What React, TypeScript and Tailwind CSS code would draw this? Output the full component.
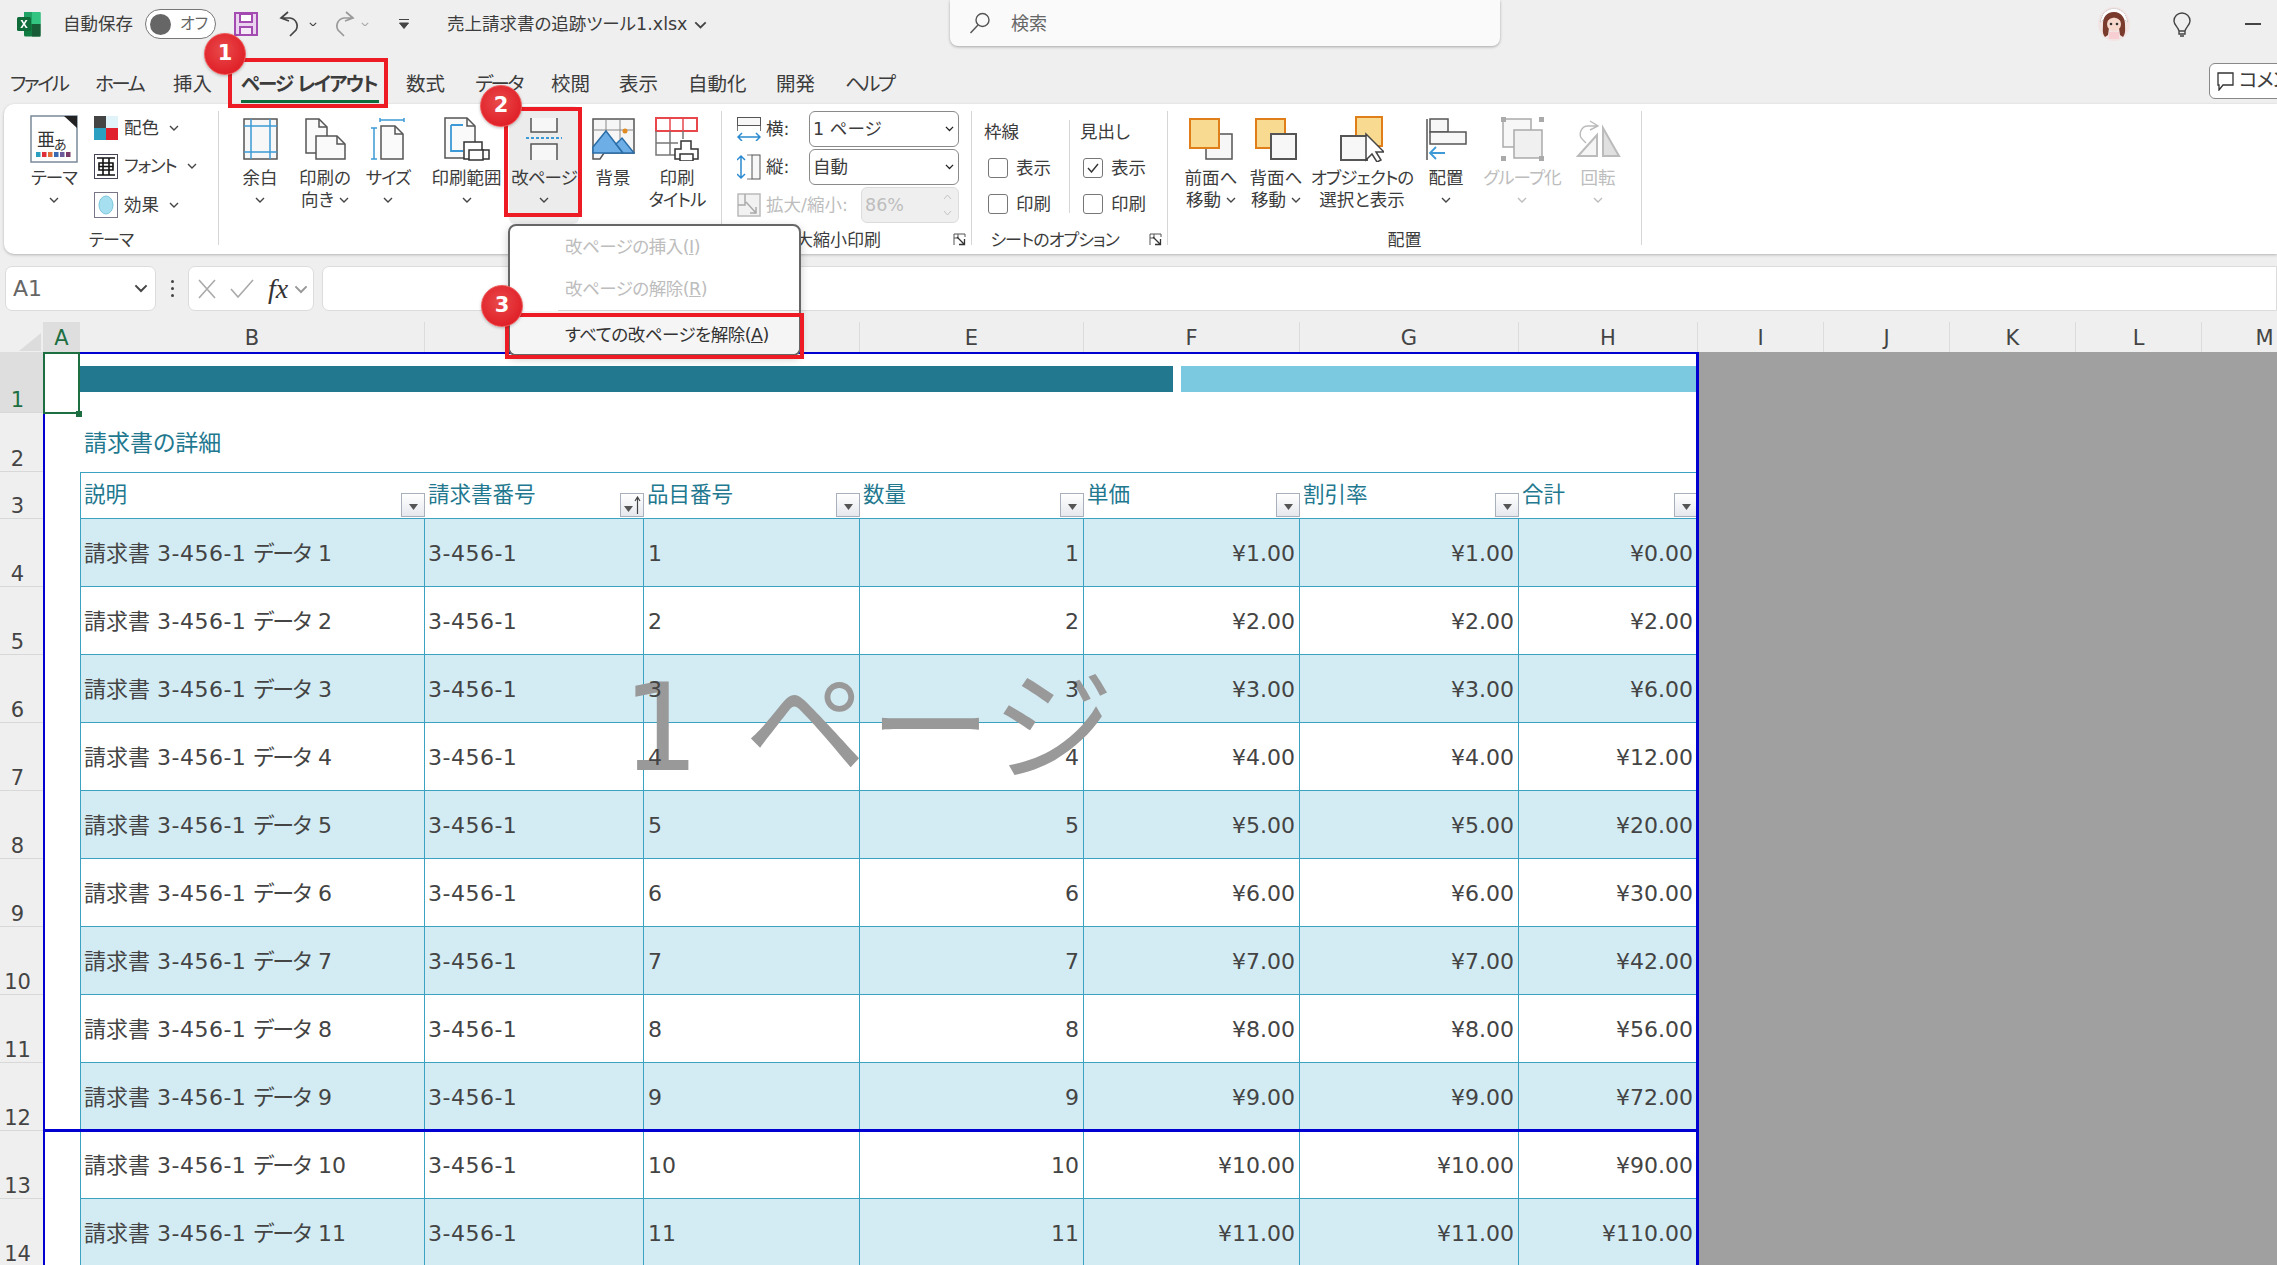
import React from "react";

const Chev = ({ w = 10, c = "#444" }: { w?: number; c?: string }) => (
  <svg width={w} height={w * 0.6} viewBox="0 0 10 6" className="inline-block shrink-0">
    <path d="M1 1l4 4 4-4" fill="none" stroke={c} strokeWidth="1.4" />
  </svg>
);

const ExcelLogo = () => (
  <svg width="26" height="26" viewBox="0 0 26 26" className="shrink-0">
    <path d="M8 1h15a1.5 1.5 0 0 1 1.5 1.5V13H8z" fill="#21a366" />
    <path d="M8 13h16.500v11a1.500 1.500 0 0 1-1.500 1.500H9.500A1.500 1.500 0 0 1 8 24z" fill="#107c41" />
    <path d="M16 1h8.500v12H16z" fill="#33c481" />
    <path d="M16 13h8.500v12.500H16z" fill="#185c37" />
    <rect x="1" y="6" width="14" height="14" rx="1.500" fill="#0f6b38" />
    <path d="M4.500 9l2.500 4-2.700 4h2l1.700-2.800L9.700 17h2L9 13l2.500-4h-2L8 11.800 6.500 9z" fill="#fff" />
  </svg>
);
const Save = () => (
  <svg width="24" height="24" viewBox="0 0 24 24" className="shrink-0">
    <path d="M1 1h22v22H1z" fill="#e9d3ef" stroke="#a34bb0" strokeWidth="2" />
    <path d="M6 2h12v8H6z" fill="#fff" stroke="#a34bb0" strokeWidth="2" />
    <path d="M6 15h12v8H6z" fill="#f5e9f7" stroke="#a34bb0" strokeWidth="2" />
  </svg>
);
const Undo = ({ c }: { c: string }) => (
  <svg width="22" height="26" viewBox="0 0 22 26" className="shrink-0">
    <path d="M9 1L2 7l8 3M2 7h9a8 8 0 0 1 6 12l-6 6" fill="none" stroke={c} strokeWidth="1.700" />
  </svg>
);
const Redo = ({ c }: { c: string }) => (
  <svg width="22" height="26" viewBox="0 0 22 26" className="shrink-0">
    <path d="M13 1l7 6-8 3M20 7h-9a8 8 0 0 0-6 12l6 6" fill="none" stroke={c} strokeWidth="1.700" />
  </svg>
);
const Avatar = () => (
  <svg width="38" height="34" viewBox="0 0 38 34" className="shrink-0">
    <ellipse cx="19" cy="17" rx="16" ry="17" fill="#f3e4e4" />
    <path d="M8 7q11-11 22 0l3 8-5-3H10l-5 3z" fill="#fff" stroke="#999" strokeWidth=".6" strokeDasharray="1 1" />
    <path d="M19 5c-8 0-11 6-11 12s-1 9 2 13l3-2 1-7h10l1 7 3 2c3-4 2-8 2-13S27 5 19 5z" fill="#7a3a2c" />
    <ellipse cx="19" cy="17" rx="7" ry="7" fill="#f6d9cc" />
    <path d="M12 14q7-7 14 0l-2-5H14z" fill="#7a3a2c" />
    <circle cx="16" cy="17" r="1.300" fill="#333" />
    <circle cx="22" cy="17" r="1.300" fill="#333" />
    <path d="M14 25h10v7H14z" fill="#f7cfd2" />
  </svg>
);
const Bulb = () => (
  <svg width="20" height="25" viewBox="0 0 20 25" className="shrink-0">
    <path d="M10 1a8 8 0 0 0-8 8c0 4 4 6 5 10h6c1-4 5-6 5-10a8 8 0 0 0-8-8zM7 19h6v3H7zM8 24h4" fill="none" stroke="#444" strokeWidth="1.400" />
  </svg>
);
const SearchIc = () => (
  <svg width="22" height="22" viewBox="0 0 22 22" className="shrink-0">
    <circle cx="13.500" cy="8" r="6.500" fill="none" stroke="#555" strokeWidth="1.400" />
    <path d="M9 13L1.500 21" stroke="#555" strokeWidth="1.400" />
  </svg>
);

const Sq = ({ children, w, h }: { children: React.ReactNode; w: number; h: number }) => (
  <svg width={w} height={h} viewBox={`0 0 ${w} ${h}`} className="shrink-0">
    {children}
  </svg>
);

const ThemeIc = () => (
  <Sq w={48} h={48}>
    <rect x="1" y="1" width="46" height="46" fill="#fff" stroke="#7a8a9a" strokeWidth="1.500" />
    <path d="M34 1h13v12z" fill="#222" />
    <text x="7" y="31" fontSize="18" fontFamily="Noto Sans CJK JP" fill="#333">亜</text>
    <text x="24" y="34" fontSize="13" fontFamily="Noto Sans CJK JP" fill="#333">あ</text>
    {["#2a9fbf", "#e0303a", "#e0703a", "#3a6ab0", "#6a5a9a", "#7a3a6a"].map((c, i) => (
      <rect key={c} x={6 + i * 6} y="37" width="4.500" height="5" fill={c} />
    ))}
  </Sq>
);
const ColorIc = () => (
  <Sq w={24} h={24}>
    <rect width="12" height="12" fill="#444" />
    <rect x="12" width="12" height="12" fill="#dff3f8" />
    <rect y="12" width="12" height="12" fill="#2ba0c0" />
    <rect x="12" y="12" width="12" height="12" fill="#e0202c" />
  </Sq>
);
const FontIc = () => (
  <Sq w={24} h={25}>
    <rect x=".5" y=".5" width="23" height="24" fill="#fff" stroke="#445" />
    <path d="M3 4h18M3 21h18M5 9h14v7H5zM9 4v17M15 4v17M5 12.500h14" stroke="#111" strokeWidth="1.600" fill="none" />
  </Sq>
);
const EffectIc = () => (
  <Sq w={24} h={26}>
    <rect x=".5" y=".5" width="23" height="25" fill="#fff" stroke="#778" />
    <ellipse cx="12" cy="13" rx="7" ry="9" fill="#a6e0f0" stroke="#7cc6dc" />
  </Sq>
);
const Margin = () => (
  <Sq w={35} h={42}>
    <rect x="1" y="1" width="33" height="40" fill="#f7f7f7" stroke="#555" strokeWidth="1.500" />
    <path d="M8 1v40M27 1v40M1 8h33M1 34h33" stroke="#3e9ad6" strokeWidth="1.500" />
  </Sq>
);
const Orient = () => (
  <Sq w={44} h={42}>
    <path d="M3 1h13l8 8v26H3z" fill="#fafafa" stroke="#555" strokeWidth="1.500" />
    <path d="M16 1v8h8" fill="none" stroke="#555" strokeWidth="1.500" />
    <path d="M13 18h21l8 8v15H13z" fill="#fafafa" stroke="#555" strokeWidth="1.500" />
    <path d="M34 18v8h8" fill="none" stroke="#555" strokeWidth="1.500" />
  </Sq>
);
const SizeIc = () => (
  <Sq w={34} h={42}>
    <path d="M10 8h14l8 8v25H10z" fill="#fafafa" stroke="#555" strokeWidth="1.500" />
    <path d="M24 8v8h8" fill="none" stroke="#555" strokeWidth="1.500" />
    <path d="M9 2h24M9 0v4M33 0v4M3 10v31M0 10h6M0 41h6" stroke="#3e9ad6" strokeWidth="1.500" />
  </Sq>
);
const PrintArea = () => (
  <Sq w={48} h={44}>
    <path d="M2 1h22l8 8v32H2z" fill="#fafafa" stroke="#555" strokeWidth="1.500" />
    <path d="M24 1v8h8" fill="none" stroke="#555" strokeWidth="1.500" />
    <path d="M8 8h12M8 8v26h12" fill="none" stroke="#3e9ad6" strokeWidth="1.800" />
    <path d="M22 26h18v8h7v9H22z" fill="#fff" stroke="#333" strokeWidth="1.500" transform="translate(-1 -1)" />
    <path d="M26 33h14v10H26z" fill="#fff" stroke="#333" strokeWidth="1.500" />
  </Sq>
);
const BreakIc = () => (
  <Sq w={36} h={42}>
    <path d="M5 0v14h26V0" fill="#f7f7f7" stroke="#555" strokeWidth="1.500" />
    <path d="M0 20h36" stroke="#3e9ad6" strokeWidth="2" strokeDasharray="3 2" />
    <path d="M5 42V26h26v16" fill="#f7f7f7" stroke="#555" strokeWidth="1.500" />
  </Sq>
);
const BgIc = () => (
  <Sq w={43} h={42}>
    <path d="M1 1h41v34H12l-4 6H1z" fill="#f6f6f6" stroke="#555" strokeWidth="1.500" />
    <path d="M14 1v20M28 1v20M1 12h41" stroke="#888" />
    <circle cx="33" cy="13" r="2.500" fill="#e08a20" />
    <path d="M1 29L14 13l17 22H1z" fill="#6eaee6" stroke="#2a6ea8" strokeWidth="1.500" />
    <path d="M24 26l6-6 12 15H31z" fill="#6eaee6" stroke="#2a6ea8" strokeWidth="1.500" />
  </Sq>
);
const TitleIc = () => (
  <Sq w={44} h={44}>
    <path d="M1 1h41v13H1z" fill="#fff" stroke="#e8474c" strokeWidth="2" />
    <path d="M15 1v13M28 1v13" stroke="#e8474c" strokeWidth="1.500" />
    <path d="M1 14v24h20M15 14v24M28 14v8M1 26h22" fill="none" stroke="#777" strokeWidth="1.500" />
    <path d="M26 24h10v8h7v10H20V32h6z" fill="#fff" stroke="#333" strokeWidth="1.500" />
    <path d="M25 37h13v7H25z" fill="#fff" stroke="#333" strokeWidth="1.500" />
  </Sq>
);
const Front = () => (
  <Sq w={44} h={42}>
    <path d="M15 16h28v25H17V30" fill="#f7f7f7" stroke="#555" strokeWidth="1.500" />
    <rect x="1" y="1" width="29" height="29" fill="#f8da90" stroke="#e07f1a" strokeWidth="2" />
  </Sq>
);
const Back = () => (
  <Sq w={43} h={42}>
    <rect x="1" y="1" width="29" height="29" fill="#f8da90" stroke="#e07f1a" strokeWidth="2" />
    <rect x="16" y="16" width="25" height="25" fill="#f7f7f7" stroke="#555" strokeWidth="2" />
  </Sq>
);
const Selection = () => (
  <Sq w={44} h={46}>
    <rect x="16" y="1" width="26" height="29" fill="#f8da90" stroke="#e07f1a" strokeWidth="2" />
    <rect x="1" y="20" width="26" height="24" fill="#f7f7f7" stroke="#555" strokeWidth="2" />
    <path d="M26 18v26l6-6 5 8 4-2-5-8h8z" fill="#fff" stroke="#444" strokeWidth="1.500" />
  </Sq>
);
const AlignIc = () => (
  <Sq w={42} h={42}>
    <path d="M2 1v41" stroke="#555" strokeWidth="1.500" />
    <rect x="5" y="1" width="18" height="13" fill="#f7f7f7" stroke="#555" strokeWidth="1.500" />
    <rect x="5" y="14" width="36" height="12" fill="#f7f7f7" stroke="#555" strokeWidth="1.500" />
    <path d="M20 35H5m6-6l-6 6 6 6" fill="none" stroke="#3e9ad6" strokeWidth="1.800" />
  </Sq>
);
const GroupIc = () => (
  <Sq w={43} h={44}>
    <rect x="2" y="2" width="28" height="28" fill="#f7f7f7" stroke="#aaa" strokeWidth="1.500" />
    <rect x="13" y="13" width="28" height="28" fill="#f0f0f0" stroke="#aaa" strokeWidth="1.500" />
    <path d="M0 0h5v5H0zM38 0h5v5h-5zM0 39h5v5H0zM38 39h5v5h-5z" fill="#aaa" />
  </Sq>
);
const RotateIc = () => (
  <Sq w={46} h={38}>
    <path d="M22 15l-19 21h19z" fill="#f5f5f5" stroke="#bbb" strokeWidth="2" />
    <path d="M28 8v28h16z" fill="#e0e0e0" stroke="#bbb" strokeWidth="2" />
    <path d="M15 1l8 5-8 4M22 6h-8a8 8 0 0 0-6 14l3 3" fill="none" stroke="#bbb" strokeWidth="1.400" />
  </Sq>
);
const HIc = () => (
  <Sq w={24} h={24}>
    <rect x=".5" y=".5" width="23" height="8" fill="#f7f7f7" stroke="#555" />
    <path d="M.5 9v5M23.500 9v5" stroke="#777" />
    <path d="M1 20h22M5 16l-4 4 4 4M19 16l4 4-4 4" fill="none" stroke="#2b8ad0" strokeWidth="1.500" />
  </Sq>
);
const VIc = () => (
  <Sq w={24} h={26}>
    <rect x="15" y="1" width="8" height="24" fill="#f7f7f7" stroke="#555" />
    <path d="M4 2v22M0 6l4-4 4 4M0 20l4 4 4-4" fill="none" stroke="#2b8ad0" strokeWidth="1.500" />
    <path d="M10 1h5M10 25h5" stroke="#777" />
  </Sq>
);
const ScaleIc = () => (
  <Sq w={24} h={24}>
    <rect x="1" y="1" width="22" height="22" fill="#f2f2f2" stroke="#bbb" strokeWidth="1.500" />
    <path d="M1 12h7V1M9 9l10 11M19 14v6h-6" fill="none" stroke="#aaa" strokeWidth="1.500" />
  </Sq>
);
const Launcher = () => (
  <Sq w={13} h={13}>
    <path d="M1 12V1h11v3M5 1v4H1" fill="none" stroke="#555" />
    <path d="M4 4l7 7M6 11.500h5.500V6" fill="none" stroke="#333" strokeWidth="1.300" />
  </Sq>
);

type LB = { w: string; icon: React.ReactNode; lines: string[]; chev?: "own" | "inline"; dis?: boolean };

const hasKana = (s: string) => /[ァ-ヶー]/.test(s);

const Large = ({ w, icon, lines, chev, dis }: LB) => (
  <div className={`${w} flex flex-col items-center pt-[6px] shrink-0 ${dis ? "text-[#bdbdbd]" : "text-[#3c3c3c]"}`}>
    <div className="h-[57px] flex items-center justify-center">{icon}</div>
    {lines.map((l, i) => (
      <div key={l} className={`leading-[22px] h-[22px] whitespace-nowrap flex items-center gap-[5px] ${hasKana(l) ? "tracking-[-0.9px]" : ""}`}>
        {l}
        {chev === "inline" && i === lines.length - 1 && <Chev />}
      </div>
    ))}
    {chev === "own" && (
      <div className="h-[22px] flex items-center">
        <Chev c={dis ? "#bdbdbd" : "#444"} />
      </div>
    )}
  </div>
);

const Small = ({ icon, label, gap }: { icon: React.ReactNode; label: string; gap: string }) => (
  <div className="h-[39px] flex items-center gap-[6px]">
    {icon}
    <span className={`whitespace-nowrap ${hasKana(label) ? "tracking-[-1.2px]" : ""}`}>{label}</span>
    <span className={`${gap} flex items-center`}>
      <Chev />
    </span>
  </div>
);

const GroupLabel = ({ children, tight }: { children: React.ReactNode; tight?: boolean }) => (
  <div className={`h-[30px] leading-[32px] text-center text-[17px] text-[#3c3c3c] whitespace-nowrap ${tight ? "tracking-[-0.9px]" : ""}`}>{children}</div>
);

const Sep = () => <div className="w-px bg-[#d6d6d6] mt-[7px] mb-[9px] shrink-0" />;

const Check = ({ on, label }: { on?: boolean; label: string }) => (
  <div className="h-[36px] flex items-center gap-[8px]">
    <span className="w-[20px] h-[20px] rounded-[3px] border border-[#777] bg-white flex items-center justify-center">
      {on && (
        <svg width="12" height="10" viewBox="0 0 12 10">
          <path d="M1 5l3.500 4L11 1" fill="none" stroke="#333" strokeWidth="1.400" />
        </svg>
      )}
    </span>
    <span>{label}</span>
  </div>
);

const Sel = ({ label }: { label: string }) => (
  <div className="w-[150px] h-[36px] rounded-[6px] border border-[#8a8a8a] bg-white flex items-center justify-between pl-[3px] pr-[4px]">
    <span>{label}</span>
    <Chev w={9} c="#222" />
  </div>
);

const Badge = ({ n, cls }: { n: string; cls: string }) => (
  <div
    className={`absolute ${cls} w-[42px] h-[42px] rounded-full bg-[radial-gradient(circle_at_45%_40%,#e84a4a,#e01f28_75%,#c9141c)] border border-[#f05a5a] text-white text-[21px] font-bold flex items-center justify-center z-40 shadow-[0_1px_3px_rgba(0,0,0,0.25)]`}
  >
    {n}
  </div>
);

const colW = [
  "w-[345px]",
  "w-[219px]",
  "w-[216px]",
  "w-[224px]",
  "w-[216px]",
  "w-[219px]",
  "w-[179px]",
];
const headers = ["説明", "請求書番号", "品目番号", "数量", "単価", "割引率", "合計"];

const FilterBtn = ({ sort }: { sort?: boolean }) => (
  <div className="absolute right-0 bottom-[1px] w-[24px] h-[24px] border border-[#a8b0bc] bg-gradient-to-b from-white to-[#e6e8ee] flex items-center justify-center gap-[1px]">
    <svg width="9" height="6" viewBox="0 0 9 6" className={sort ? "mt-[8px]" : "mt-[3px]"}>
      <path d="M0 0h9L4.500 6z" fill="#555" />
    </svg>
    {sort && (
      <svg width="7" height="18" viewBox="0 0 7 18">
        <path d="M3.500 18V2M1 5l2.500-4L6 5" fill="none" stroke="#444" strokeWidth="1.200" />
      </svg>
    )}
  </div>
);

const RowHead = ({ n, sel, cls }: { n: number; sel?: boolean; cls: string }) => (
  <div
    className={`w-[43px] ${cls} shrink-0 border-b border-[#d8d8d8] flex items-end justify-center pr-[8px] text-[21px] leading-[24px] ${
      sel ? "bg-[#dedede] text-[#1d6f42]" : "bg-[#efefef] text-[#444]"
    }`}
  >
    {n}
  </div>
);

const rows = [1, 2, 3, 4, 5, 6, 7, 8, 9, 10, 11];
const tabKana = "tracking-[-2.5px] whitespace-nowrap";

export default function App() {
  return (
    <div className="relative w-[2277px] h-[1265px] overflow-hidden bg-[#efefef] text-[17.5px] text-[#3c3c3c] [font-family:'DejaVu_Sans','Noto_Sans_CJK_JP',sans-serif] [font-feature-settings:'palt']">
      {/* title bar */}
      <div className="h-[48px] flex items-center pl-[16px] text-[17.5px]">
        <ExcelLogo />
        <span className="ml-[21px] w-[76px] whitespace-nowrap">自動保存</span>
        <div className="ml-[6px] w-[71px] h-[30px] rounded-full border border-[#777] bg-white flex items-center pl-[4px] gap-[9px]">
          <span className="w-[21px] h-[21px] rounded-full bg-[#666]" />
          <span className="text-[16px] text-[#666]">オフ</span>
        </div>
        <div className="ml-[18px]">
          <Save />
        </div>
        <div className="ml-[21px] flex items-center gap-[8px]">
          <Undo c="#444" />
          <Chev w={8} />
        </div>
        <div className="ml-[16px] flex items-center gap-[6px]">
          <Redo c="#999" />
          <Chev w={8} c="#aaa" />
        </div>
        <svg width="12" height="12" viewBox="0 0 12 12" className="ml-[29px] shrink-0">
          <path d="M1 1.500h10M1.500 5h9L6 10.500z" fill="#444" stroke="#444" />
        </svg>
        <span className="ml-[37px] w-[239px] whitespace-nowrap">売上請求書の追跡ツール1.xlsx</span>
        <span className="ml-[8px]">
          <Chev w={13} />
        </span>
        <div className="ml-[243px] self-start w-[550px] h-[46px] rounded-b-[8px] bg-[#fafafa] shadow-[0_1px_3px_rgba(0,0,0,0.3)] flex items-center pl-[19px] gap-[20px] text-[#666] text-[18px]">
          <SearchIc />
          <span>検索</span>
        </div>
        <div className="ml-[595px]">
          <Avatar />
        </div>
        <div className="ml-[39px]">
          <Bulb />
        </div>
        <div className="ml-[53px] w-[16px] h-[2px] bg-[#444]" />
      </div>

      {/* tabs */}
      <div className="mt-[12px] h-[44px] flex items-center pl-[10px] pt-[5px] text-[19.5px] text-[#3c3c3c] relative">
        <span className={`w-[85px] ${tabKana}`}>ファイル</span>
        <span className={`w-[78px] ${tabKana}`}>ホーム</span>
        <span className="w-[68px]">挿入</span>
        <span className="w-[165px] font-bold whitespace-nowrap relative tracking-[-1.8px]">
          ページ レイアウト
          <span className="absolute left-0 right-[27px] top-[30px] h-[3px] bg-[#0f6b3b]" />
        </span>
        <span className="w-[69px]">数式</span>
        <span className={`w-[76px] ${tabKana}`}>データ</span>
        <span className="w-[68px]">校閲</span>
        <span className="w-[69px]">表示</span>
        <span className="w-[88px]">自動化</span>
        <span className="w-[69px]">開発</span>
        <span className={`w-[60px] ${tabKana}`}>ヘルプ</span>
        <div className="absolute left-[2209px] top-[3px] w-[90px] h-[36px] rounded-[6px] border border-[#888] bg-white flex items-center pl-[7px] gap-[5px] whitespace-nowrap tracking-[-1px]">
          <svg width="17" height="19" viewBox="0 0 17 19" className="shrink-0">
            <path d="M1 1h15v12H6l-4 5v-5H1z" fill="none" stroke="#333" strokeWidth="1.300" />
          </svg>
          コメント
        </div>
      </div>

      {/* ribbon */}
      <div className="ml-[4px] h-[150px] rounded-l-[10px] bg-white shadow-[0_1px_3px_rgba(0,0,0,0.25)] flex">
        {/* テーマ */}
        <div className="w-[214px] shrink-0 flex flex-col">
          <div className="h-[120px] flex pl-[12px]">
            <Large w="w-[76px]" icon={<ThemeIc />} lines={["テーマ"]} chev="own" />
            <div className="ml-[2px] pt-[5px] flex flex-col">
              <Small icon={<ColorIc />} label="配色" gap="ml-[4px]" />
              <Small icon={<FontIc />} label="フォント" gap="ml-[4px]" />
              <Small icon={<EffectIc />} label="効果" gap="ml-[4px]" />
            </div>
          </div>
          <GroupLabel tight>テーマ</GroupLabel>
        </div>
        <Sep />
        {/* ページ設定 */}
        <div className="w-[502px] shrink-0 flex flex-col">
          <div className="h-[120px] flex pl-[3px]">
            <Large w="w-[76px]" icon={<Margin />} lines={["余白"]} chev="own" />
            <Large w="w-[54px]" icon={<Orient />} lines={["印刷の", "向き"]} chev="inline" />
            <Large w="w-[72px]" icon={<SizeIc />} lines={["サイズ"]} chev="own" />
            <Large w="w-[85px]" icon={<PrintArea />} lines={["印刷範囲"]} chev="own" />
            <div className="w-[70px] h-[118px] mt-[2px] -mb-[2px] bg-[#ececec] rounded-[6px] shrink-0">
              <Large w="w-[70px] -mt-[2px]" icon={<BreakIc />} lines={["改ページ"]} chev="own" />
            </div>
            <Large w="w-[68px]" icon={<BgIc />} lines={["背景"]} />
            <Large w="w-[60px]" icon={<TitleIc />} lines={["印刷", "タイトル"]} />
          </div>
          <div className="pl-[197px] text-left">
            <GroupLabel tight>ページ設定</GroupLabel>
          </div>
        </div>
        <Sep />
        {/* 拡大縮小印刷 */}
        <div className="w-[249px] shrink-0 flex flex-col">
          <div className="h-[120px] pl-[15px] pt-[6px] flex flex-col">
            <div className="h-[39px] flex items-center">
              <HIc />
              <span className="ml-[5px] w-[43px]">横:</span>
              <Sel label="1 ページ" />
            </div>
            <div className="h-[39px] flex items-center">
              <VIc />
              <span className="ml-[5px] w-[43px]">縦:</span>
              <Sel label="自動" />
            </div>
            <div className="h-[39px] flex items-center text-[#bdbdbd]">
              <ScaleIc />
              <span className="ml-[5px] w-[95px] whitespace-nowrap">拡大/縮小:</span>
              <div className="w-[98px] h-[36px] rounded-[6px] border border-[#dcdcdc] bg-[#efefef] flex items-center justify-between pl-[3px] pr-[6px]">
                <span>86%</span>
                <svg width="9" height="22" viewBox="0 0 9 22">
                  <path d="M1 5l3.500-4L8 5M1 17l3.500 4L8 17" fill="none" stroke="#c4c4c4" />
                </svg>
              </div>
            </div>
          </div>
          <div className="flex items-center justify-end pr-[5px] gap-[72px]">
            <GroupLabel>拡大縮小印刷</GroupLabel>
            <Launcher />
          </div>
        </div>
        <Sep />
        {/* シートのオプション */}
        <div className="w-[195px] shrink-0 flex flex-col">
          <div className="h-[120px] flex pt-[10px]">
            <div className="w-[97px] pl-[12px] shrink-0">
              <div className="h-[36px] flex items-center">枠線</div>
              <div className="pl-[4px]">
                <Check label="表示" />
                <Check label="印刷" />
              </div>
            </div>
            <div className="w-px h-[93px] mt-[6px] bg-[#d6d6d6]" />
            <div className="pl-[10px]">
              <div className="h-[36px] flex items-center">見出し</div>
              <div className="pl-[3px]">
                <Check on label="表示" />
                <Check label="印刷" />
              </div>
            </div>
          </div>
          <div className="flex items-center justify-end pr-[5px] gap-[30px]">
            <GroupLabel tight>シートのオプション</GroupLabel>
            <Launcher />
          </div>
        </div>
        <Sep />
        {/* 配置 */}
        <div className="w-[473px] shrink-0 flex flex-col">
          <div className="h-[120px] flex pl-[13px]">
            <Large w="w-[60px]" icon={<Front />} lines={["前面へ", "移動"]} chev="inline" />
            <Large w="w-[70px]" icon={<Back />} lines={["背面へ", "移動"]} chev="inline" />
            <Large w="w-[102px]" icon={<Selection />} lines={["オブジェクトの", "選択と表示"]} />
            <Large w="w-[66px]" icon={<AlignIc />} lines={["配置"]} chev="own" />
            <Large w="w-[86px]" icon={<GroupIc />} lines={["グループ化"]} chev="own" dis />
            <Large w="w-[66px]" icon={<RotateIc />} lines={["回転"]} chev="own" dis />
          </div>
          <GroupLabel>配置</GroupLabel>
        </div>
        <Sep />
      </div>

      {/* formula bar */}
      <div className="h-[68px] pt-[12px] pb-[11px] flex text-[#555]">
        <div className="ml-[5px] w-[151px] rounded-[7px] border border-[#dcdcdc] bg-white flex items-center justify-between pl-[7px] pr-[7px] text-[22px] text-[#666]">
          <span>A1</span>
          <Chev w={14} />
        </div>
        <div className="w-[32px] flex flex-col items-center justify-center gap-[4px]">
          <span className="w-[3px] h-[3px] bg-[#444] rounded-full" />
          <span className="w-[3px] h-[3px] bg-[#444] rounded-full" />
          <span className="w-[3px] h-[3px] bg-[#444] rounded-full" />
        </div>
        <div className="w-[126px] rounded-[7px] border border-[#dcdcdc] bg-white flex items-center pl-[9px]">
          <svg width="18" height="22" viewBox="0 0 18 22" className="shrink-0">
            <path d="M1 2l16 18M17 2L1 20" stroke="#aaa" strokeWidth="1.600" />
          </svg>
          <svg width="24" height="20" viewBox="0 0 24 20" className="ml-[14px] shrink-0">
            <path d="M1 10l7 8L23 1" fill="none" stroke="#aaa" strokeWidth="1.600" />
          </svg>
          <span className="ml-[14px] text-[28px] leading-[28px] text-[#333] italic [font-family:'Liberation_Serif',serif]">fx</span>
          <span className="ml-[6px]">
            <Chev w={14} c="#999" />
          </span>
        </div>
        <div className="ml-[8px] flex-1 rounded-l-[7px] border border-[#dcdcdc] bg-white" />
      </div>

      {/* column headers */}
      <div className="h-[30px] flex text-[21px] text-[#444] leading-[32px] text-center">
        <div className="w-[43px] shrink-0 flex items-end justify-end pr-[2px] pb-[1px]">
          <svg width="22" height="18" viewBox="0 0 22 18">
            <path d="M22 0v18H0z" fill="#dcdcdc" />
          </svg>
        </div>
        <div className="w-[37px] shrink-0 bg-[#dedede] text-[#1d6f42]">A</div>
        {["B", "C", "D", "E", "F", "G", "H"].map((c, i) => (
          <div key={c} className={`${colW[i]} shrink-0 border-r border-[#dcdcdc]`}>
            {c === "C" || c === "D" ? "" : c}
          </div>
        ))}
        {["I", "J", "K", "L", "M"].map((c) => (
          <div key={c} className="w-[126px] shrink-0 border-r border-[#dcdcdc]">
            {c}
          </div>
        ))}
      </div>

      {/* sheet */}
      <div className="relative flex flex-col text-[22px] text-[#444]">
        {/* row 1 */}
        <div className="flex h-[61px]">
          <RowHead n={1} sel cls="h-[61px]" />
          <div className="w-[37px] shrink-0 bg-white" />
          <div className="w-[1618px] shrink-0 bg-white pt-[14px] pr-[2px]">
            <div className="flex h-[26px] gap-[8px]">
              <div className="w-[1093px] bg-[#22788f]" />
              <div className="flex-1 bg-[#7ac9e0]" />
            </div>
          </div>
          <div className="flex-1 bg-[#a0a0a0]" />
        </div>
        {/* row 2 */}
        <div className="flex h-[59px]">
          <RowHead n={2} cls="h-[59px]" />
          <div className="w-[37px] shrink-0 bg-white" />
          <div className="w-[1618px] shrink-0 bg-white pl-[4px] pt-[12px] text-[23px] text-[#22788f] leading-[36px]">請求書の詳細</div>
          <div className="flex-1 bg-[#a0a0a0]" />
        </div>
        {/* row 3 header */}
        <div className="flex h-[47px]">
          <RowHead n={3} cls="h-[47px]" />
          <div className="w-[37px] shrink-0 bg-white" />
          {headers.map((h, i) => (
            <div
              key={h}
              className={`${colW[i]} shrink-0 relative bg-white border-t border-b border-[#3ba3c1] ${
                i === 0 ? "border-l" : ""
              } pl-[3px] text-[21.5px] text-[#22788f] leading-[44px] whitespace-nowrap`}
            >
              {h}
              <FilterBtn sort={i === 1} />
            </div>
          ))}
          <div className="flex-1 bg-[#a0a0a0]" />
        </div>
        {/* data rows */}
        {rows.map((n) => {
          const blue = n % 2 === 1;
          const bg = blue ? "bg-[#d3ecf4]" : "bg-white";
          const cell = `${bg} shrink-0 border-b border-r border-[#3ba3c1] flex items-center pt-[2px]`;
          const yen = [`¥${n}.00`, `¥${n}.00`, `¥${n * (n - 1)}.00`];
          return (
            <div key={n} className="flex h-[68px]">
              <RowHead n={n + 3} cls="h-[68px]" />
              <div className="w-[37px] shrink-0 bg-white" />
              <div className={`${colW[0]} ${cell} border-l pl-[3px] whitespace-nowrap`}>
                <span className="relative z-20">
                  請求書 <span className="tracking-[0.5px]">3-456-1</span>{" "}
                  <span className="tracking-[-1.6px] mr-[1px]">データ</span> {n}
                </span>
              </div>
              <div className={`${colW[1]} ${cell} pl-[3px]`}>
                <span className="relative z-20 tracking-[0.5px]">3-456-1</span>
              </div>
              <div className={`${colW[2]} ${cell} pl-[4px]`}>
                <span className="relative z-20">{n}</span>
              </div>
              <div className={`${colW[3]} ${cell} justify-end pr-[4px]`}>
                <span className="relative z-20">{n}</span>
              </div>
              {yen.map((y, i) => (
                <div key={i} className={`${colW[4 + i]} ${cell} justify-end pr-[4px]`}>
                  <span className="relative z-20">{y}</span>
                </div>
              ))}
              <div className="flex-1 bg-[#a0a0a0]" />
            </div>
          );
        })}

        {/* watermark */}
        <div className="absolute left-[622px] top-[296px] z-10 text-[122px] leading-[160px] text-[#999] whitespace-nowrap tracking-[3px] [font-feature-settings:normal]">
          1 ページ
        </div>

        {/* page-break lines */}
        <div className="absolute left-[43px] top-0 w-[1656px] h-[2px] bg-[#0000d0] z-20" />
        <div className="absolute left-[43px] top-0 w-[2px] h-[915px] bg-[#0000d0] z-20" />
        <div className="absolute left-[1696px] top-0 w-[3px] h-[915px] bg-[#0000d0] z-20" />
        <div className="absolute left-[43px] top-[777px] w-[1656px] h-[3px] bg-[#0000d0] z-20" />

        {/* selected cell */}
        <div className="absolute left-[43px] top-0 w-[37px] h-[62px] border-[2px] border-[#1d6f42] z-30" />
        <div className="absolute left-[76px] top-[59px] w-[6px] h-[6px] bg-[#1d6f42] z-30" />
      </div>

      {/* dropdown menu */}
      <div className="absolute left-[508px] top-[224px] w-[293px] h-[132px] rounded-[8px] border-[2px] border-[#666] bg-white z-30 flex flex-col text-[17.5px] tracking-[-0.5px] shadow-[0_3px_8px_rgba(0,0,0,0.2)]">
        <div className="h-[43px] pl-[55px] flex items-center text-[#bdbdbd]">
          <span>
            改ページの挿入(<u>I</u>)
          </span>
        </div>
        <div className="h-[41px] pl-[55px] flex items-center text-[#bdbdbd]">
          <span>
            改ページの解除(<u>R</u>)
          </span>
        </div>
        <div className="ml-[48px] h-px bg-[#d4d4d4]" />
        <div className="flex-1 pl-[55px] pt-[6px] flex items-center bg-[#f5f5f5] rounded-b-[6px] text-[#333]">
          <span>
            すべての改ページを解除(<u>A</u>)
          </span>
        </div>
      </div>

      {/* annotations */}
      <div className="absolute left-[228px] top-[58px] w-[160px] h-[50px] border-[4px] border-[#ed1c24] z-40" />
      <div className="absolute left-[504px] top-[107px] w-[78px] h-[110px] border-[4px] border-[#ed1c24] z-40" />
      <div className="absolute left-[505px] top-[313px] w-[299px] h-[46px] border-[4px] border-[#ed1c24] z-40" />
      <Badge n="1" cls="left-[204px] top-[33px]" />
      <Badge n="2" cls="left-[480px] top-[85px]" />
      <Badge n="3" cls="left-[481px] top-[285px]" />
    </div>
  );
}
